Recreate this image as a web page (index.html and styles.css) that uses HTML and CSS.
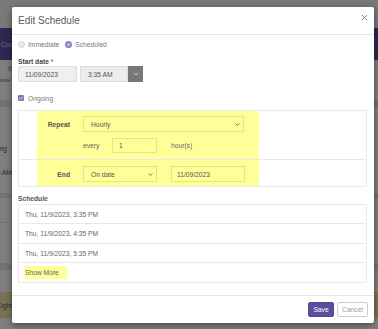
FILE: index.html
```html
<!DOCTYPE html>
<html>
<head>
<meta charset="utf-8">
<link rel="stylesheet" href="styles.css">
</head>
<body>
<div class="app">
  <div class="app-top"></div>
  <div class="app-nav"><span>Courses</span></div>
  <div class="app-tools">
    <div class="tool-icon"><svg width="4" height="5" viewBox="0 0 4 5"><path d="M0.5 1 H3.5 M1 1 V4.5 H3 V1 M1.5 1 V0.4 H2.5 V1" stroke="#888" stroke-width="0.6" fill="none"/></svg></div>
    <div class="clip"><span>Remove</span></div>
  </div>
  <div class="app-band"></div>
  <div class="app-area a1">
    <div class="clip t-ing"><span>Ongoing</span></div>
    <div class="clip t-am"><span>3:35 AM</span></div>
  </div>
  <div class="app-band b2"></div>
  <div class="app-area a2"></div>
  <div class="app-band b3"></div>
  <div class="app-area a3"></div>
  <div class="app-warn"><div class="clip"><span>Eight</span></div></div>
  <div class="app-area a4"></div>
</div>
<div class="overlay"></div>

<div class="modal">
  <div class="m-head">
    <div class="m-title">Edit Schedule</div>
    <svg class="m-close" width="7" height="7" viewBox="0 0 7 7"><path d="M0.8 0.8 L6.2 6.2 M6.2 0.8 L0.8 6.2" stroke="#8a8a8a" stroke-width="1"/></svg>
  </div>
  <div class="m-body">
    <div class="radios">
      <label class="radio"><i></i><span>Immediate</span></label>
      <label class="radio on"><i></i><span>Scheduled</span></label>
    </div>
    <div class="lbl">Start date<span class="req">*</span></div>
    <div class="dt-row">
      <div class="inp date">11/09/2023</div>
      <div class="inp time">3:35 AM</div>
      <div class="dd"><svg width="6" height="4" viewBox="0 0 6 4"><path d="M0.7 0.8 L3 3 L5.3 0.8" stroke="#d6d6d6" stroke-width="0.9" fill="none"/></svg></div>
    </div>
    <div class="ongoing"><span class="cb"><svg width="6" height="6" viewBox="0 0 6 6"><path d="M1.4 3 L2.6 4.1 L4.7 1.8" stroke="#fff" stroke-width="0.8" fill="none"/></svg></span><span>Ongoing</span></div>

    <div class="rep">
      <div class="rep-row r1">
        <div class="rep-gap"></div>
        <div class="rep-cell">
          <div class="r-lbl">Repeat</div>
          <div class="sel wide"><span>Hourly</span><svg width="5" height="3" viewBox="0 0 5 3"><path d="M0.5 0.5 L2.5 2.5 L4.5 0.5" stroke="#555" stroke-width="0.8" fill="none"/></svg></div>
          <div class="every"><span>every</span><div class="box num">1</div></div>
          <div class="hours">hour(s)</div>
        </div>
      </div>
      <div class="rep-row r2">
        <div class="rep-gap"></div>
        <div class="rep-cell">
          <div class="r-lbl">End</div>
          <div class="sel"><span>On date</span><svg width="5" height="3" viewBox="0 0 5 3"><path d="M0.5 0.5 L2.5 2.5 L4.5 0.5" stroke="#555" stroke-width="0.8" fill="none"/></svg></div>
          <div class="box enddate">11/09/2023</div>
        </div>
      </div>
    </div>

    <div class="sch-lbl">Schedule</div>
    <div class="list">
      <div class="li h18">Thu, 11/9/2023, 3:35 PM</div>
      <div class="li h19">Thu, 11/9/2023, 4:35 PM</div>
      <div class="li h18">Thu, 11/9/2023, 5:35 PM</div>
      <div class="li h19 more"><span>Show More</span></div>
    </div>
  </div>
  <div class="m-foot">
    <button class="btn save">Save</button>
    <button class="btn cancel">Cancel</button>
  </div>
</div>
</body>
</html>
```

FILE: styles.css
```css
* { box-sizing: border-box; margin: 0; padding: 0; }
html, body { width: 378px; height: 329px; overflow: hidden; }
body {
  font-family: "Liberation Sans", Arial, sans-serif;
  font-size: 6.7px;
  color: #555;
  background: #fff;
  position: relative;
}

/* background application */
.app { width: 378px; height: 329px; display: flex; flex-direction: column; background: #fff; }
.app-top { height: 28px; background: #f3f3f3; }
.app-nav { height: 32px; background: #5b52a3; color: #dcdcec; font-size: 7px; display: flex; align-items: center; padding-left: 1px; }
.app-tools { height: 40px; display: flex; flex-direction: column; padding-top: 5px; }
.tool-icon { padding-left: 8px; height: 6px; }
.app-tools .clip { margin-top: 6px; color: #555; font-size: 6px; }
.clip { width: 10px; display: flex; justify-content: flex-end; white-space: nowrap; }
.app-band { height: 7px; background: #e6e6e6; }
.app-area.a1 { height: 86px; display: flex; flex-direction: column; padding-top: 38px; color: #555; }
.t-ing { width: 7px; }
.t-am { width: 12px; margin-top: 17px; }
.app-band.b2 { height: 5px; }
.app-area.a2 { height: 65px; border-top: 24px solid #fff; }
.app-area.a2 { box-shadow: inset 0 25px 0 -24px #e2e2e2; }
.app-band.b3 { height: 7px; }
.app-area.a3 { height: 22px; }
.app-warn { height: 26px; background: #f5e4a8; display: flex; align-items: center; color: #555; }
.app-warn .clip { width: 12px; }
.app-area.a4 { flex: 1; }

.overlay { position: absolute; left: 0; top: 0; width: 378px; height: 329px; background: rgba(0, 0, 0, 0.5); }

/* modal */
.modal {
  position: absolute;
  left: 12px;
  top: 7px;
  width: 362px;
  height: 316px;
  background: #fff;
  border-radius: 2px;
  box-shadow: 0 2px 7px rgba(0, 0, 0, 0.45);
  display: flex;
  flex-direction: column;
}
.m-head {
  height: 28px;
  border-bottom: 1px solid #e6e6e6;
  display: flex;
  align-items: center;
  justify-content: space-between;
  padding: 0 6px;
  flex: none;
}
.m-title { font-size: 10px; color: #5a5a5a; line-height: 1; }
.m-close { align-self: flex-start; margin-top: 7px; }

.m-body { flex: 1; padding: 0 7px 0 6px; display: flex; flex-direction: column; }

.radios { margin-top: 3px; height: 12px; display: flex; align-items: center; gap: 6px; }
.radio { display: flex; align-items: center; gap: 3px; color: #777; }
.radio i { width: 7px; height: 7px; border-radius: 50%; border: 1px solid #cfcfcf; background: #ececec; }
.radio.on i { border: 2px solid #8a80c2; background: #c9c4e6; }

.lbl { margin-top: 6px; height: 10px; display: flex; align-items: center; font-weight: bold; color: #454545; }
.req { color: #e0413c; margin-left: 2px; }

.dt-row { height: 16px; display: flex; }
.inp { height: 16px; border: 1px solid #dedede; background: #efefef; display: flex; align-items: center; padding-left: 6px; color: #555; }
.inp.date { width: 59px; }
.inp.time { width: 48px; margin-left: 3px; background: #ececec; padding-left: 7px; }
.dd { width: 15px; height: 16px; background: #777; display: flex; align-items: center; justify-content: center; }

.ongoing { margin-top: 11px; height: 10px; display: flex; align-items: center; gap: 4px; color: #777; }
.cb { width: 6px; height: 6px; background: #8077bf; border-radius: 1px; display: flex; }

/* repeat box */
.rep { margin-top: 7px; height: 77px; border: 1px solid #e9e9e9; display: flex; flex-direction: column; }
.rep-row { display: flex; }
.rep-row.r1 { height: 49px; border-bottom: 1px solid #e9e9e9; }
.rep-row.r2 { height: 26px; }
.rep-gap { width: 18px; flex: none; }
.rep-cell {
  width: 222px;
  background: #ffff99;
  display: grid;
  grid-template-columns: 33px 13px 74px 14px 74px;
  align-content: start;
  align-items: center;
}
.r1 .rep-cell { padding-top: 5px; grid-template-rows: 16px 15px; row-gap: 6px; }
.r2 .rep-cell { padding-top: 6px; grid-template-rows: 16px; }
.r-lbl { grid-column: 1; text-align: right; font-weight: bold; color: #555; }
.sel {
  grid-column: 3;
  height: 16px;
  border: 1px solid rgba(0, 0, 0, 0.11);
  display: flex;
  align-items: center;
  justify-content: space-between;
  padding: 0 3px 0 7px;
  color: #555;
}
.sel.wide { grid-column: 3 / 6; width: 161px; }
.every { grid-column: 3; display: flex; align-items: center; justify-content: space-between; color: #666; }
.box { border: 1px solid rgba(0, 0, 0, 0.11); display: flex; align-items: center; color: #555; }
.box.num { width: 45px; height: 15px; padding-left: 6px; }
.hours { grid-column: 5; color: #666; }
.box.enddate { grid-column: 5; height: 16px; padding-left: 5px; }

/* schedule list */
.sch-lbl { margin-top: 6px; height: 10px; display: flex; align-items: center; font-weight: bold; color: #555; }
.list { margin-top: 1px; border: 1px solid #e9e9e9; border-bottom: none; }
.li { border-bottom: 1px solid #e9e9e9; display: flex; align-items: center; padding-left: 6px; color: #666; }
.li.h18 { height: 19px; }
.li.h19 { height: 20px; }
.li.more { padding-left: 5px; }
.li.more span { background: #ffff99; height: 13px; display: flex; align-items: center; padding: 0 8px 0 1px; color: #666; }

/* footer */
.m-foot {
  height: 28px;
  flex: none;
  border-top: 1px solid #e6e6e6;
  display: flex;
  justify-content: flex-end;
  align-items: flex-start;
  gap: 3px;
  padding: 6px 6px 0 0;
}
.btn { height: 15px; font-family: "Liberation Sans", Arial, sans-serif; font-size: 6.7px; border-radius: 2px; display: flex; align-items: center; justify-content: center; }
.btn.save { width: 26px; background: #5a4e9e; color: #fff; border: 1px solid #524793; }
.btn.cancel { width: 31px; background: #fff; color: #999; border: 1px solid #cdcdcd; }
```
